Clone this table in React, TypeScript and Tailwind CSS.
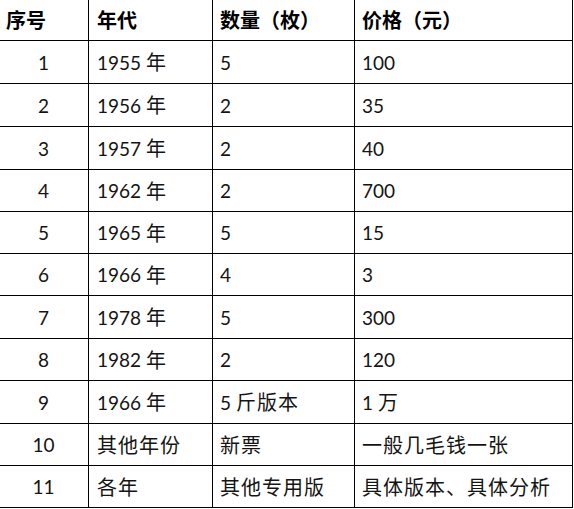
import React from "react";

const header = ["序号", "年代", "数量（枚）", "价格（元）"];

const rows: string[][] = [
  ["1", "1955 年", "5", "100"],
  ["2", "1956 年", "2", "35"],
  ["3", "1957 年", "2", "40"],
  ["4", "1962 年", "2", "700"],
  ["5", "1965 年", "5", "15"],
  ["6", "1966 年", "4", "3"],
  ["7", "1978 年", "5", "300"],
  ["8", "1982 年", "2", "120"],
  ["9", "1966 年", "5 斤版本", "1 万"],
  ["10", "其他年份", "新票", "一般几毛钱一张"],
  ["11", "各年", "其他专用版", "具体版本、具体分析"],
];

const rowH = [
  "h-[43px]",
  "h-[43px]",
  "h-[43px]",
  "h-[42px]",
  "h-[42px]",
  "h-[42px]",
  "h-[43px]",
  "h-[42px]",
  "h-[43px]",
  "h-[42px]",
  "h-[42px]",
];

function Txt({ text }: { text: string }) {
  const parts = text.match(/[\u3000-\u9fff\uff00-\uffef]+|[^\u3000-\u9fff\uff00-\uffef]+/g) || [];
  return (
    <>
      {parts.map((p, i) =>
        /[\u3000-\u9fff\uff00-\uffef]/.test(p) ? (
          <span
            key={i}
            className="text-[20px] tracking-[1px] [font-family:'Noto_Sans_CJK_SC',sans-serif]"
          >
            {p}
          </span>
        ) : (
          <span
            key={i}
            className="text-[19px] whitespace-pre [font-family:Lato,'Noto_Sans_CJK_SC',sans-serif]"
          >
            {p}
          </span>
        )
      )}
    </>
  );
}

const colW = ["w-[90px]", "w-[124px]", "w-[142px]", "w-[218px]"];
const colPad = ["pl-[7px]", "pl-2", "pl-[7px]", "pl-[7px]"];

export default function App() {
  return (
    <div className="w-[574px] h-[509px] overflow-hidden bg-white">
      <div className="ml-[-2px] mt-[-1px] w-[575px] border-l border-t border-black text-[#141414]">
        <div className="flex h-[41px]">
          {header.map((h, i) => (
            <div
              key={i}
              className={`${colW[i]} ${colPad[i]} flex items-center border-r border-b border-black font-bold text-black text-[20px] [font-family:'Noto_Sans_CJK_SC',sans-serif]`}
            >
              {h}
            </div>
          ))}
        </div>
        {rows.map((r, ri) => (
          <div key={ri} className={`flex ${rowH[ri]}`}>
            {r.map((c, ci) => (
              <div
                key={ci}
                className={`${colW[ci]} flex items-center border-r border-b border-black leading-none ${
                  ci === 0 ? "justify-center" : colPad[ci]
                }`}
              >
                <Txt text={c} />
              </div>
            ))}
          </div>
        ))}
      </div>
    </div>
  );
}
